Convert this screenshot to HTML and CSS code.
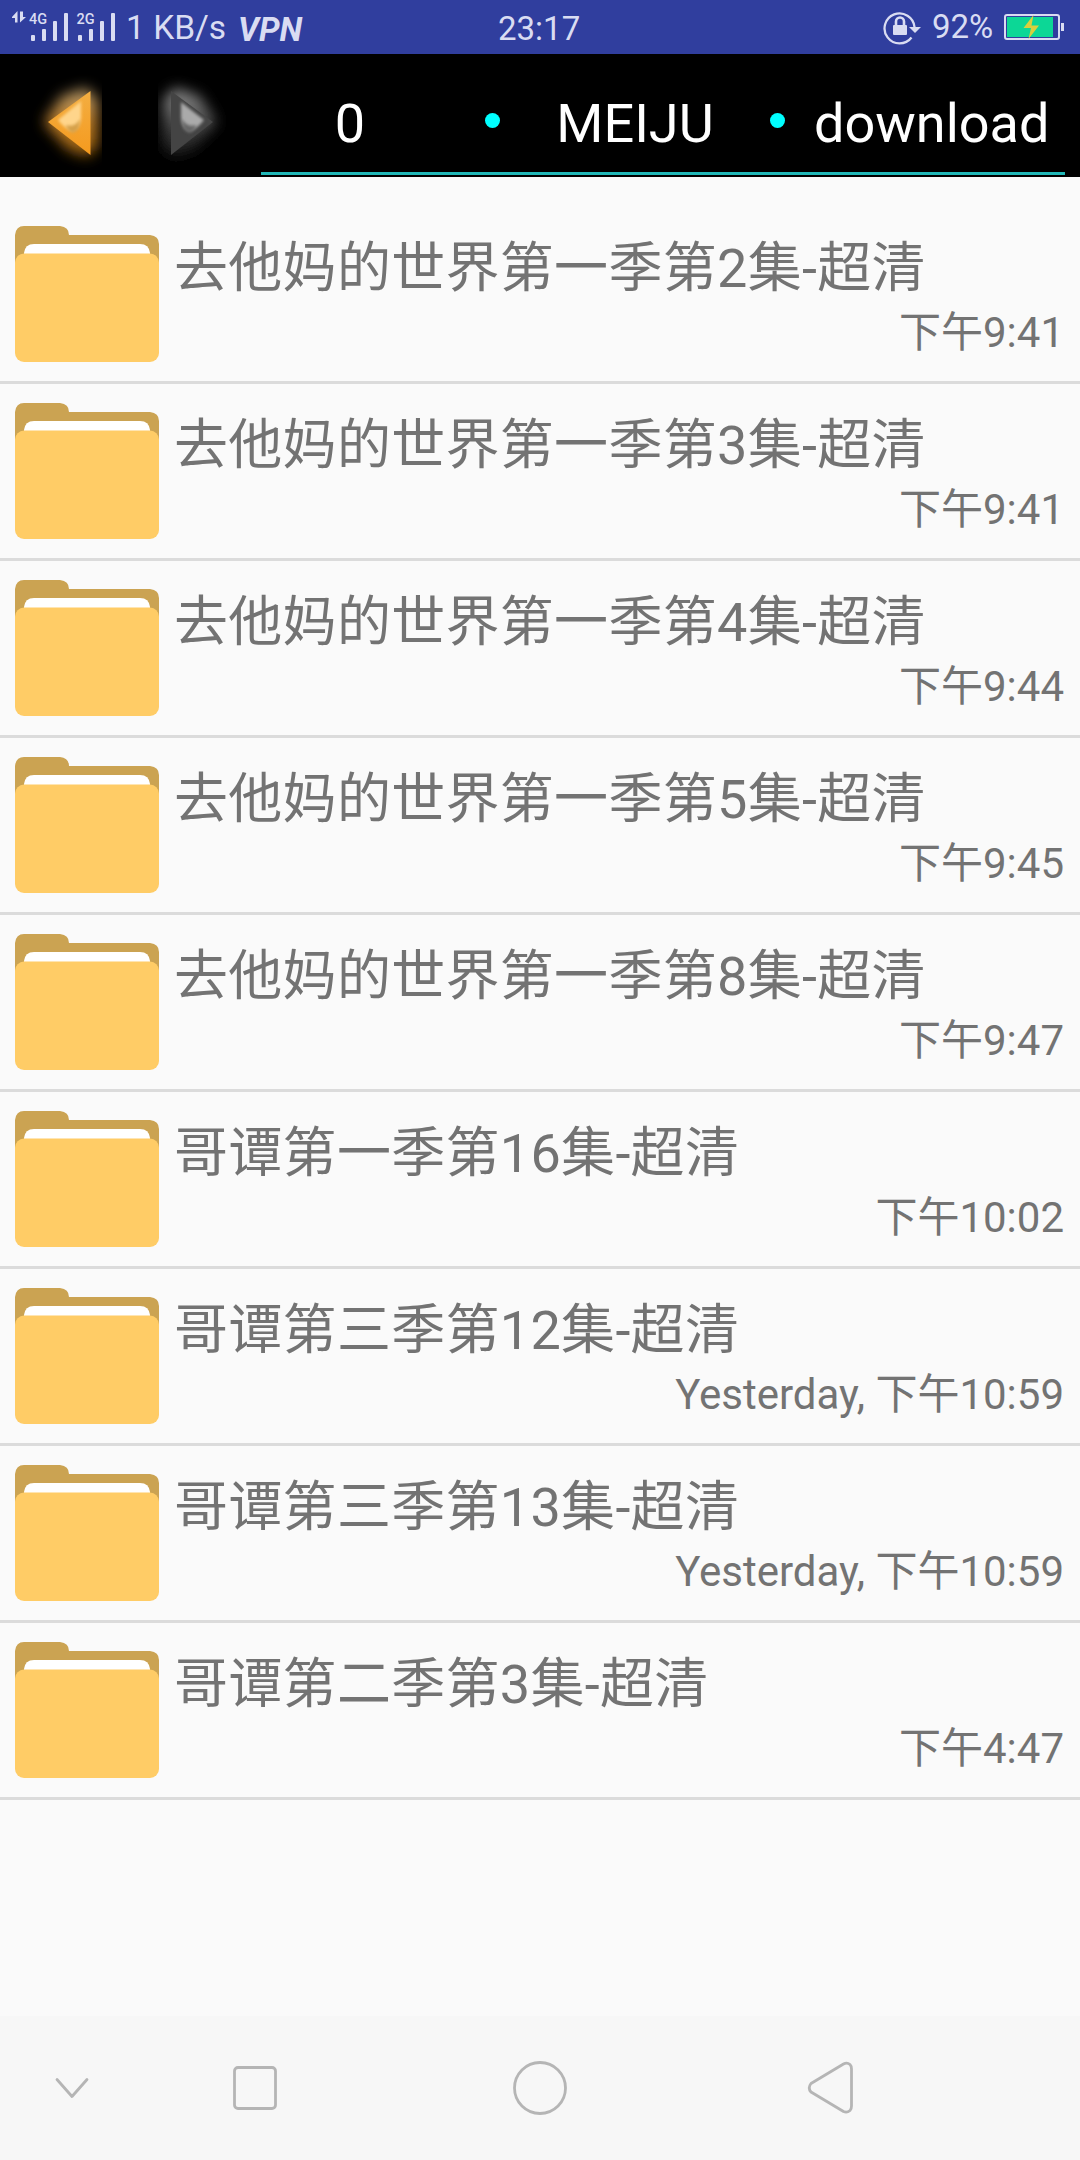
FILE: index.html
```html
<!DOCTYPE html>
<html lang="zh">
<head>
  <meta charset="UTF-8" />
  <meta name="viewport" content="width=device-width, initial-scale=1" />
  <title>download</title>
  <link rel="stylesheet" href="styles.css">
</head>
<body>

<!-- Shared shapes -->
<svg class="defs" aria-hidden="true">
  <symbol id="folder" viewBox="0 0 144 136">
    <path fill="#cba352" d="M9 0H45Q54 1 54 9H135Q144 10 144 18V60H0V9Q1 0 9 0Z"/>
    <path fill="#fff" d="M9 30V27Q10 18 19 18H125Q134 18 135 27V30Z"/>
    <rect fill="#ffcc66" y="27.5" width="144" height="108.5" rx="9"/>
  </symbol>
</svg>

<div class="status-bar">
  <div class="status-left">
    <svg class="signal" width="106" height="54" viewBox="12 0 106 54" fill="#d9dcf2">
      <path d="M12 17L17.500 11V22.500H15V18H12ZM20 11.500V22.500L26 17H23V11.500Z"/>
      <text x="29" y="24" class="signal-text">4G</text>
      <rect x="31" y="35" width="4" height="6" rx="1"/>
      <rect x="42" y="29" width="4" height="12" rx="1"/>
      <rect x="53" y="21" width="4" height="20" rx="1"/>
      <rect x="64" y="13" width="4" height="28" rx="1"/>
      <text x="76.500" y="24" class="signal-text">2G</text>
      <rect x="78" y="35" width="4" height="6" rx="1"/>
      <rect x="89" y="29" width="4" height="12" rx="1"/>
      <rect x="100" y="21" width="4" height="20" rx="1"/>
      <rect x="111" y="13" width="4" height="28" rx="1"/>
    </svg>
    <span class="speed">1 KB/s</span>
    <span class="vpn">VPN</span>
  </div>
  <div class="clock">23:17</div>
  <div class="status-right">
    <svg width="40" height="54" viewBox="882 0 40 54" fill="none" stroke="#d9dcf2">
      <path d="M911.500 37.500A15 15 0 1 1 914.500 27" stroke-width="2.300"/>
      <path d="M909 27H921L915 33Z" fill="#d9dcf2" stroke="none"/>
      <rect x="893" y="25" width="14" height="10" rx="1" fill="#d9dcf2" stroke="none"/>
      <path d="M896 25V21.500A4 4 0 0 1 904 21.500V25" stroke-width="2.600"/>
    </svg>
    <span class="percent">92%</span>
    <svg width="62" height="54" viewBox="1003 0 62 54">
      <rect x="1005" y="15" width="54" height="24" rx="2" fill="none" stroke="#d9dcf2" stroke-width="2"/>
      <rect x="1007" y="17" width="46" height="20" fill="#0cd796"/>
      <rect x="1061" y="23" width="3" height="8" fill="#d9dcf2"/>
      <path fill="#d8cf3d" d="M1033.500 15L1023.500 28H1031L1028.500 39L1039 25.500H1031.500Z"/>
    </svg>
  </div>
</div>

<header>
  <svg class="arrows" width="261" height="123" viewBox="0 54 261 123">
    <defs>
      <filter id="glow" x="-60%" y="-60%" width="220%" height="220%"><feGaussianBlur stdDeviation="7"/></filter>
      <filter id="soft" x="-30%" y="-30%" width="160%" height="160%"><feGaussianBlur stdDeviation="1.800"/></filter>
      <linearGradient id="gold" x1="0" y1="0" x2="0" y2="1">
        <stop offset="0" stop-color="#f3ae42"/><stop offset="1" stop-color="#f59a1e"/>
      </linearGradient>
      <linearGradient id="goldGlow" x1="0" y1="0" x2="0" y2="1">
        <stop offset="0" stop-color="#b59c70"/><stop offset=".5" stop-color="#b97a26"/><stop offset="1" stop-color="#925b0c"/>
      </linearGradient>
      <linearGradient id="greyGlow" x1="0" y1="0" x2="0" y2="1">
        <stop offset="0" stop-color="#949494"/><stop offset=".6" stop-color="#3c3c3c"/><stop offset="1" stop-color="#181818"/>
      </linearGradient>
      <clipPath id="clipBack"><rect x="30" y="66" width="72" height="111"/></clipPath>
      <clipPath id="clipNext"><rect x="158" y="66" width="72" height="111"/></clipPath>
    </defs>
    <g clip-path="url(#clipBack)">
      <path d="M44 122L62 96L86 88L98 100V146L88 157L68 150Z" fill="url(#goldGlow)" filter="url(#glow)"/>
      <path d="M48 122L90.500 91V155Z" fill="url(#gold)"/>
      <path d="M58 120L81 101V118Q80 129 72 131Q65 129 58 120Z" fill="#ffd58b" filter="url(#soft)"/>
      <path d="M66 125Q75 128 80 119Q80 131 73 133Q67 131 66 125Z" fill="#d5a04a" filter="url(#soft)"/>
    </g>
    <g clip-path="url(#clipNext)">
      <path d="M217 122L199 96L175 88L163 100V146L173 157L193 150Z" fill="url(#greyGlow)" filter="url(#glow)"/>
      <path d="M213 122L171 91V155Z" fill="#444"/>
      <path d="M204 120L181 102V118Q182 129 190 131Q197 129 204 120Z" fill="#aaa" filter="url(#soft)"/>
      <path d="M196 125Q187 128 182 119Q182 131 189 133Q195 131 196 125Z" fill="#666" filter="url(#soft)"/>
    </g>
  </svg>
  <nav class="path">
    <a class="crumb">0</a>
    <span class="dot"></span>
    <a class="crumb">MEIJU</a>
    <span class="dot"></span>
    <a class="crumb last">download</a>
  </nav>
</header>

<main>
  <ul class="files">
    <li><svg class="folder"><use href="#folder"/></svg><div class="info"><div class="name">去他妈的世界第一季第2集-超清</div><div class="time">下午9:41</div></div></li>
    <li><svg class="folder"><use href="#folder"/></svg><div class="info"><div class="name">去他妈的世界第一季第3集-超清</div><div class="time">下午9:41</div></div></li>
    <li><svg class="folder"><use href="#folder"/></svg><div class="info"><div class="name">去他妈的世界第一季第4集-超清</div><div class="time">下午9:44</div></div></li>
    <li><svg class="folder"><use href="#folder"/></svg><div class="info"><div class="name">去他妈的世界第一季第5集-超清</div><div class="time">下午9:45</div></div></li>
    <li><svg class="folder"><use href="#folder"/></svg><div class="info"><div class="name">去他妈的世界第一季第8集-超清</div><div class="time">下午9:47</div></div></li>
    <li><svg class="folder"><use href="#folder"/></svg><div class="info"><div class="name">哥谭第一季第16集-超清</div><div class="time">下午10:02</div></div></li>
    <li><svg class="folder"><use href="#folder"/></svg><div class="info"><div class="name">哥谭第三季第12集-超清</div><div class="time">Yesterday, 下午10:59</div></div></li>
    <li><svg class="folder"><use href="#folder"/></svg><div class="info"><div class="name">哥谭第三季第13集-超清</div><div class="time">Yesterday, 下午10:59</div></div></li>
    <li><svg class="folder"><use href="#folder"/></svg><div class="info"><div class="name">哥谭第二季第3集-超清</div><div class="time">下午4:47</div></div></li>
  </ul>
</main>

<footer class="nav-bar">
  <svg class="nav-hide" width="34" height="144" viewBox="55 0 34 144"><path d="M57 63.500L72 80.500L87 63.500"/></svg>
  <svg class="nav-recent" width="46" height="144" viewBox="232 0 46 144"><rect x="234.500" y="51.500" width="41" height="41" rx="3.500"/></svg>
  <svg class="nav-home" width="56" height="144" viewBox="512 0 56 144"><circle cx="540" cy="72" r="25.500"/></svg>
  <svg class="nav-back" width="48" height="144" viewBox="807 0 48 144"><path d="M811 67.500L843.500 48Q847 46 850 48.500Q851.500 50 851.500 53V90Q851.500 93 850 94.500Q847 97 843.500 95.500L811 76Q807.500 72 811 67.500Z"/></svg>
</footer>

</body>
</html>
```

FILE: styles.css
```css
* {
  box-sizing: border-box;
}
body {
  margin: 0;
  height: 2160px;
  display: flex;
  flex-direction: column;
  font-family: Roboto, "Noto Sans CJK SC", sans-serif;
  background: #fafafa;
  color: #737373;
}
svg {
  display: block;
  flex-shrink: 0;
}
.defs {
  position: absolute;
  width: 0;
  height: 0;
}

/* Status bar */
.status-bar {
  height: 54px;
  flex-shrink: 0;
  display: flex;
  background: #303e9e;
  color: #d9dcf2;
  font-size: 33px;
  line-height: 55px;
  white-space: nowrap;
}
.status-left {
  display: flex;
  width: 498px;
  padding-left: 12px;
}
.signal-text {
  font-size: 14.5px;
  font-weight: 500;
}
.speed {
  margin-left: 8px;
  width: 112px;
  font-size: 33.5px;
}
.vpn {
  font-size: 33px;
  line-height: 59px;
  font-weight: 700;
  font-style: italic;
}
.clock {
  width: 384px;
  line-height: 57px;
}
.status-right {
  display: flex;
}
.percent {
  width: 71px;
  margin-left: 10px;
  line-height: 54px;
}

/* Toolbar with path */
header {
  height: 123px;
  flex-shrink: 0;
  display: flex;
  background: #000;
}
.path {
  width: 804px;
  height: 121px;
  display: flex;
  align-items: center;
  border-bottom: 3px solid #21b8b8;
}
.crumb {
  width: 178px;
  padding-top: 21px;
  color: #fff;
  font-size: 54px;
  line-height: 64px;
  text-align: center;
}
.crumb.last {
  width: auto;
  margin-left: -17px;
}
.dot {
  width: 15px;
  height: 15px;
  margin: 15px 46px 0 46px;
  border-radius: 50%;
  background: #00ffff;
}

/* File list */
main {
  flex: 1;
  padding-top: 30px;
}
.files {
  list-style: none;
  margin: 0;
  padding: 0;
}
.files li {
  height: 177px;
  display: flex;
  padding: 19px 15px 0;
  border-bottom: 3px solid #dbdbdb;
}
.folder {
  width: 144px;
  height: 136px;
}
.info {
  flex: 1;
  padding-left: 15px;
}
.name {
  height: 72px;
  font-size: 54px;
  line-height: 86px;
  letter-spacing: 0.3px;
  white-space: nowrap;
}
.time {
  padding-right: 1px;
  font-size: 42px;
  line-height: 70px;
  text-align: right;
}

/* Navigation buttons */
.nav-bar {
  height: 144px;
  flex-shrink: 0;
  display: flex;
  padding-left: 55px;
  background: #f7f7f7;
}
.nav-bar svg {
  fill: none;
  stroke: #b5b5b5;
  stroke-width: 2.8;
  stroke-linecap: round;
  stroke-linejoin: round;
}
.nav-recent {
  margin-left: 143px;
}
.nav-home {
  margin-left: 234px;
}
.nav-back {
  margin-left: 239px;
}
```
